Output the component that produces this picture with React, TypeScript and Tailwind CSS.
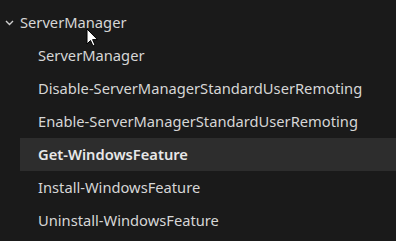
import React from "react";

const items = [
  "ServerManager",
  "Disable-ServerManagerStandardUserRemoting",
  "Enable-ServerManagerStandardUserRemoting",
  "Get-WindowsFeature",
  "Install-WindowsFeature",
  "Uninstall-WindowsFeature",
];

export default function App() {
  return (
    <div
      className="relative w-[396px] h-[241px] bg-[#1a1a1a] text-[#d6d6d6] overflow-hidden pt-[6px]"
      style={{ fontFamily: '"Segoe UI", "Noto Sans", sans-serif' }}
    >
      <div className="h-[33px] flex items-center pl-[5px] text-[14.7px]">
        <svg width="9" height="6" viewBox="0 0 9 6" className="mr-[6px] mt-[1px]">
          <path d="M1 1 L4.5 4.5 L8 1" stroke="#cfcfcf" strokeWidth="1.4" fill="none" />
        </svg>
        <span>ServerManager</span>
      </div>
      {items.map((t) => {
        const sel = t === "Get-WindowsFeature";
        return (
          <div
            key={t}
            className={
              "h-[33px] ml-[20px] flex items-center pl-[18px] text-[14.7px] " +
              (sel ? "bg-[#2d2d2d] font-semibold text-[#e8e8e8]" : "")
            }
          >
            {t}
          </div>
        );
      })}
      <svg
        className="absolute left-[86px] top-[28px]"
        width="13"
        height="20"
        viewBox="0 0 13 20"
      >
        <path
          d="M1 1 L1 16 L4.5 12.5 L7 18 L9 17 L6.6 11.6 L11.5 11.6 Z"
          fill="#ffffff"
          stroke="#000000"
          strokeWidth="1"
          strokeLinejoin="miter"
        />
      </svg>
    </div>
  );
}
